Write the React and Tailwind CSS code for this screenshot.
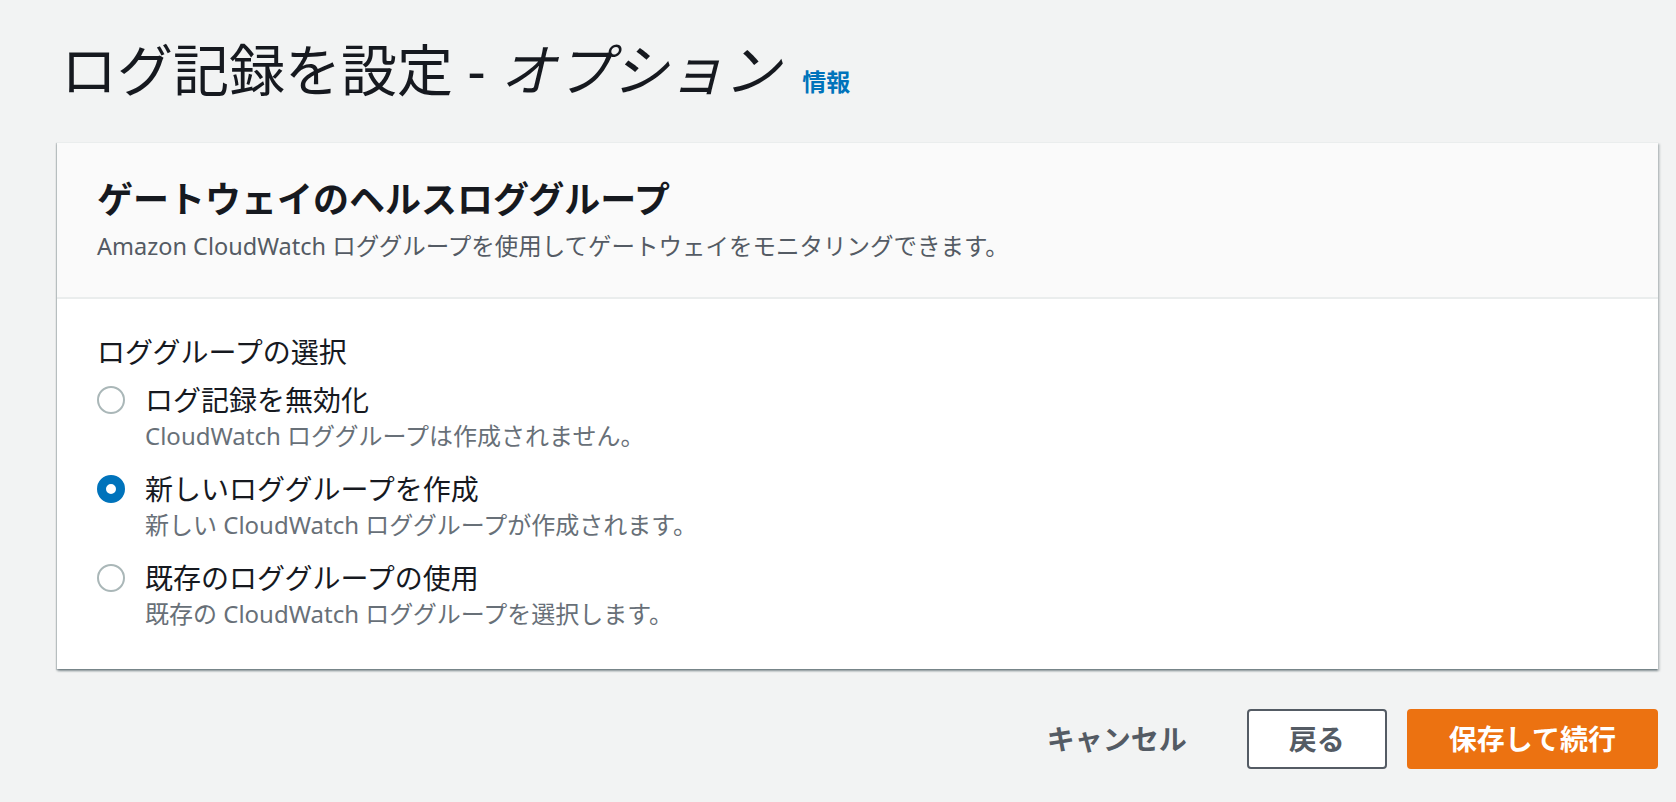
import React from "react";

const FONT = { fontFamily: '"Noto Sans", "Noto Sans CJK JP", sans-serif' };

function Radio({ checked }) {
  if (checked) {
    return (
      <span className="mt-[6px] block h-[28px] w-[28px] shrink-0 rounded-full border-[9px] border-[#0073bb] bg-white" />
    );
  }
  return (
    <span className="mt-[6px] block h-[28px] w-[28px] shrink-0 rounded-full border-2 border-[#aab7b8] bg-white" />
  );
}

function Option({ checked, label, desc }) {
  return (
    <div className="flex items-start gap-[20px]">
      <Radio checked={checked} />
      <div className="flex flex-col">
        <div className="text-[28px] leading-[40px] text-[#16191f]">{label}</div>
        <div className="text-[24px] leading-[32px] text-[#687078]">{desc}</div>
      </div>
    </div>
  );
}

export default function App() {
  return (
    <div
      className="min-h-[802px] w-full bg-[#f2f3f3] pl-[57px] pr-[18px] pt-[37px]"
      style={FONT}
    >
      <div className="flex items-baseline gap-[22px] pl-[4px]">
        <h1 className="text-[56px] font-normal leading-[64px] text-[#16191f]">
          ログ記録を設定 - <span className="italic">オプション</span>
        </h1>
        <a className="text-[24px] font-bold leading-[32px] text-[#0073bb]">情報</a>
      </div>

      <div className="mt-[41px] border-t border-[#eaeded] bg-white shadow-[0_2px_2px_0_rgba(0,28,36,0.35),2px_2px_2px_0_rgba(0,28,36,0.15),-1px_1px_1px_0_rgba(0,28,36,0.15)]">
        <div className="border-b-2 border-[#eaeded] bg-[#fafafa] px-[40px] pb-[35px] pt-[35px]">
          <h2 className="text-[36px] font-bold leading-[44px] text-[#16191f]">
            ゲートウェイのヘルスロググループ
          </h2>
          <p className="mt-[8px] text-[23.5px] leading-[32px] text-[#545b64]">
            Amazon CloudWatch ロググループを使用してゲートウェイをモニタリングできます。
          </p>
        </div>
        <div className="px-[40px] pb-[39px] pt-[33px]">
          <div className="text-[28px] leading-[40px] text-[#16191f]">ロググループの選択</div>
          <div className="mt-[8px] flex flex-col gap-[17px]">
            <Option
              label="ログ記録を無効化"
              desc="CloudWatch ロググループは作成されません。"
            />
            <Option
              checked
              label="新しいロググループを作成"
              desc="新しい CloudWatch ロググループが作成されます。"
            />
            <Option
              label="既存のロググループの使用"
              desc="既存の CloudWatch ロググループを選択します。"
            />
          </div>
        </div>
      </div>

      <div className="mt-[40px] flex items-center justify-end gap-[20px]">
        <button className="h-[60px] px-[40px] text-[28px] font-bold text-[#545b64]">
          キャンセル
        </button>
        <button className="h-[60px] rounded-[4px] border-2 border-[#545b64] bg-white px-[40px] text-[28px] font-bold text-[#545b64]">
          戻る
        </button>
        <button className="h-[60px] rounded-[4px] border-2 border-[#ec7211] bg-[#ec7211] px-[40px] text-[28px] font-bold text-white">
          保存して続行
        </button>
      </div>
    </div>
  );
}
